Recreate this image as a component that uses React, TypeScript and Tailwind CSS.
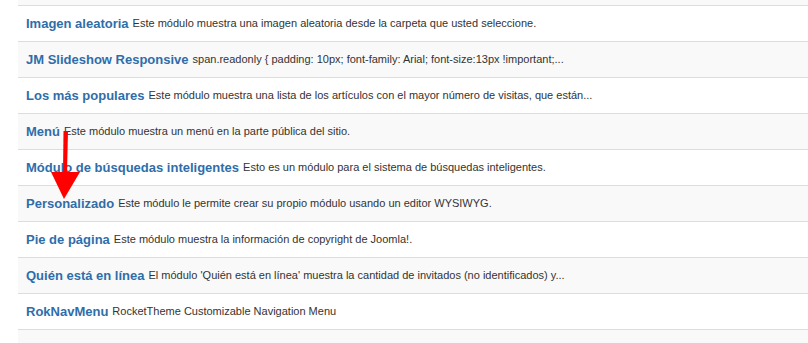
import React from "react";

const rows: { title: string; desc: string }[] = [
  { title: "Imagen aleatoria", desc: "Este módulo muestra una imagen aleatoria desde la carpeta que usted seleccione." },
  { title: "JM Slideshow Responsive", desc: "span.readonly { padding: 10px; font-family: Arial; font-size:13px !important;..." },
  { title: "Los más populares", desc: "Este módulo muestra una lista de los artículos con el mayor número de visitas, que están..." },
  { title: "Menú", desc: "Este módulo muestra un menú en la parte pública del sitio." },
  { title: "Módulo de búsquedas inteligentes", desc: "Esto es un módulo para el sistema de búsquedas inteligentes." },
  { title: "Personalizado", desc: "Este módulo le permite crear su propio módulo usando un editor WYSIWYG." },
  { title: "Pie de página", desc: "Este módulo muestra la información de copyright de Joomla!." },
  { title: "Quién está en línea", desc: "El módulo 'Quién está en línea' muestra la cantidad de invitados (no identificados) y..." },
  { title: "RokNavMenu", desc: "RocketTheme Customizable Navigation Menu" },
  { title: "Ruta de navegación", desc: "Este módulo muestra la ruta de navegación del sitio." },
];

export default function App() {
  return (
    <div className="relative w-[808px] h-[343px] overflow-hidden bg-white" style={{ fontFamily: '"Liberation Sans", Arial, sans-serif' }}>
      <div className="pl-[18px]">
        <div className="h-[5px] bg-[#f9f9f9]" />
        {rows.map((r, i) => (
          <div
            key={r.title}
            className={`h-[36px] border-t border-[#dddddd] flex items-center pl-[8px] whitespace-nowrap ${i % 2 === 0 ? "bg-white" : "bg-[#f9f9f9]"}`}
          >
            <span className="text-[13px] font-bold text-[#2f6daa]">{r.title}</span>
            <span className="text-[11px] text-[#333333] ml-[4px]">{r.desc}</span>
          </div>
        ))}
      </div>
      <svg className="absolute left-0 top-0 pointer-events-none" width="808" height="343">
        <polygon points="63.5,131 68,131 67,173 63,173" fill="#ff0000" />
        <polygon points="51,172 80,172 64,199" fill="#ff0000" />
      </svg>
    </div>
  );
}
